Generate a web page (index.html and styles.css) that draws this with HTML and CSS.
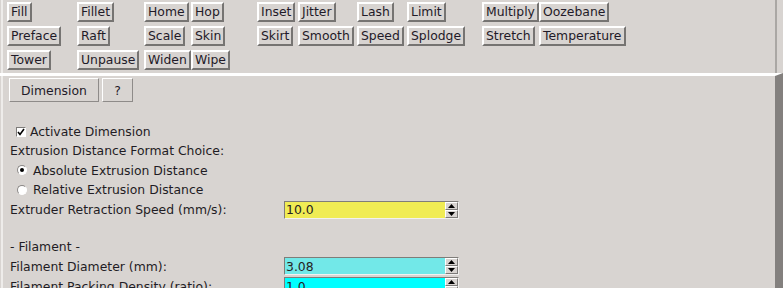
FILE: index.html
```html
<!DOCTYPE html>
<html lang="en">
<head>
    <meta charset="UTF-8">
    <title>Dimension Settings</title>
    <link rel="stylesheet" href="styles.css">
</head>
<body>
    <div class="window">
        <div class="crafts">
            <button class="craft">Fill</button>
            <button class="craft">Fillet</button>
            <button class="craft">Home</button>
            <button class="craft">Hop</button>
            <button class="craft">Inset</button>
            <button class="craft">Jitter</button>
            <button class="craft">Lash</button>
            <button class="craft">Limit</button>
            <button class="craft">Multiply</button>
            <button class="craft">Oozebane</button>

            <button class="craft">Preface</button>
            <button class="craft">Raft</button>
            <button class="craft">Scale</button>
            <button class="craft">Skin</button>
            <button class="craft">Skirt</button>
            <button class="craft">Smooth</button>
            <button class="craft">Speed</button>
            <button class="craft">Splodge</button>
            <button class="craft">Stretch</button>
            <button class="craft">Temperature</button>

            <button class="craft">Tower</button>
            <button class="craft">Unpause</button>
            <button class="craft">Widen</button>
            <button class="craft">Wipe</button>
        </div>

        <div class="panel">
            <div class="tabs">
                <button class="tab tab-wide">Dimension</button>
                <button class="tab">?</button>
            </div>

            <div class="settings">
                <div class="row row-span">
                    <span class="checkbox">
                        <svg width="8" height="8" viewBox="0 0 8 8"><path d="M1 4 L3 6.5 L7 1" fill="none" stroke="#000" stroke-width="1.6"/></svg>
                    </span>
                    Activate Dimension
                </div>
                <div class="row row-span">Extrusion Distance Format Choice:</div>
                <div class="row row-span">
                    <span class="radio radio-on"></span>Absolute Extrusion Distance
                </div>
                <div class="row row-span">
                    <span class="radio"></span>Relative Extrusion Distance
                </div>

                <div class="row">Extruder Retraction Speed (mm/s):</div>
                <div class="row">
                    <div class="field field-yellow">
                        <span class="value">10.0</span>
                        <span class="spin">
                            <span class="spin-btn"><svg width="7" height="4" viewBox="0 0 7 4"><path d="M0 4 L3.5 0 L7 4 Z" fill="#000"/></svg></span>
                            <span class="spin-btn"><svg width="7" height="4" viewBox="0 0 7 4"><path d="M0 0 L3.5 4 L7 0 Z" fill="#000"/></svg></span>
                        </span>
                    </div>
                </div>

                <div class="row row-span"></div>
                <div class="row row-span">- Filament -</div>

                <div class="row">Filament Diameter (mm):</div>
                <div class="row">
                    <div class="field field-cyan">
                        <span class="value">3.08</span>
                        <span class="spin">
                            <span class="spin-btn"><svg width="7" height="4" viewBox="0 0 7 4"><path d="M0 4 L3.5 0 L7 4 Z" fill="#000"/></svg></span>
                            <span class="spin-btn"><svg width="7" height="4" viewBox="0 0 7 4"><path d="M0 0 L3.5 4 L7 0 Z" fill="#000"/></svg></span>
                        </span>
                    </div>
                </div>

                <div class="row">Filament Packing Density (ratio):</div>
                <div class="row">
                    <div class="field field-bright">
                        <span class="value">1.0</span>
                        <span class="spin">
                            <span class="spin-btn"><svg width="7" height="4" viewBox="0 0 7 4"><path d="M0 4 L3.5 0 L7 4 Z" fill="#000"/></svg></span>
                            <span class="spin-btn"><svg width="7" height="4" viewBox="0 0 7 4"><path d="M0 0 L3.5 4 L7 0 Z" fill="#000"/></svg></span>
                        </span>
                    </div>
                </div>
            </div>
        </div>
    </div>
</body>
</html>
```

FILE: styles.css
```css
body {
    margin: 0;
    background: #d8d4d1;
    font-family: "DejaVu Sans", sans-serif;
    font-size: 12.4px;
    color: #1f1c24;
}
.window {
    width: 783px;
    height: 288px;
    overflow: hidden;
    box-shadow: inset 1px 0 0 #d8d4d1, inset 3px 0 0 #eeecea;
}
.crafts {
    display: grid;
    grid-template-columns: 70px 67px 47px 66px 41px 59px 50px 75px 57px auto;
    grid-auto-rows: 20px;
    row-gap: 4px;
    justify-items: start;
    width: 768px;
    padding: 2px 0 3px 7px;
    border-right: 2px solid #aaa7a4;
}
.craft {
    box-sizing: border-box;
    height: 20px;
    margin: 0;
    padding: 1px 2px;
    font: inherit;
    line-height: 14px;
    color: #1f1a28;
    background: #d8d4d1;
    border: 2px solid;
    border-color: #fff #767472 #767472 #fff;
}
.panel {
    height: 212px;
    border-top: 3px solid #fff;
    border-right: 8px solid #83807e;
}
.tabs {
    display: flex;
    gap: 3px;
    padding: 2px 0 0 9px;
}
.tab {
    box-sizing: border-box;
    width: 31px;
    height: 24px;
    margin: 0;
    padding: 0;
    font: inherit;
    color: #1f1a28;
    background: #d8d4d1;
    border: 1px solid;
    border-color: #fff #8e8b89 #8e8b89 #fff;
}
.tab-wide {
    width: 90px;
}
.settings {
    display: grid;
    grid-template-columns: 274px 175px;
    grid-template-rows: 19px 19px 20px 19px 21px 17px 19px 20px 20px;
    margin-top: 20px;
    padding-left: 10px;
}
.row {
    display: flex;
    align-items: center;
    white-space: nowrap;
}
.row-span {
    grid-column: 1 / 3;
}
.checkbox {
    box-sizing: border-box;
    width: 10px;
    height: 10px;
    margin: 0 4px 0 6px;
    background: #fff;
    border: 1px solid;
    border-color: #7d7b79 #fff #fff #7d7b79;
    display: flex;
    align-items: center;
    justify-content: center;
}
.radio {
    box-sizing: border-box;
    width: 10px;
    height: 10px;
    margin: 0 6px 0 7px;
    border-radius: 50%;
    background: #fff;
    border: 1px solid;
    border-color: #8a8785 #fff #fff #8a8785;
    display: flex;
    align-items: center;
    justify-content: center;
}
.radio-on::after {
    content: "";
    width: 4px;
    height: 4px;
    border-radius: 50%;
    background: #000;
}
.field {
    box-sizing: border-box;
    display: flex;
    align-items: center;
    width: 175px;
    height: 18px;
    border: 1px solid;
    border-color: #7f7d79 #f2f1ef #f2f1ef #7f7d79;
}
.field-yellow {
    background: #f0ec54;
}
.field-cyan {
    background: #72e8e8;
}
.field-bright {
    background: #00ffff;
}
.value {
    flex: 1;
    padding-left: 1px;
    color: #26231f;
}
.spin {
    display: flex;
    flex-direction: column;
    width: 13px;
    height: 16px;
    background: #d8d4d1;
}
.spin-btn {
    box-sizing: border-box;
    flex: 1;
    display: flex;
    align-items: center;
    justify-content: center;
    background: #d8d4d1;
    border: 1px solid;
    border-color: #fff #7d7b79 #7d7b79 #fff;
}
```
